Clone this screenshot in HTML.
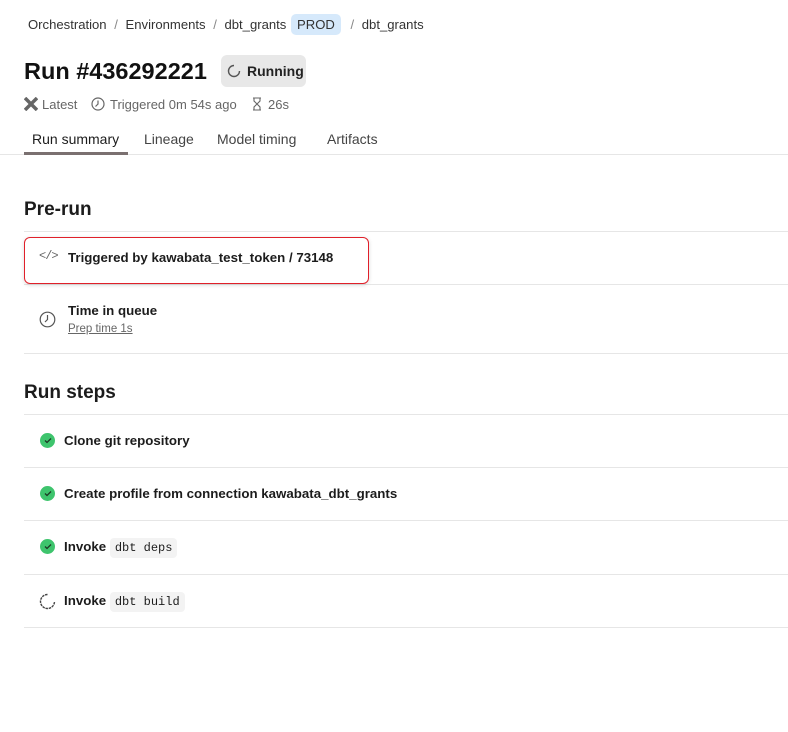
<!DOCTYPE html>
<html><head><style>
body{margin:0;width:788px;height:732px;background:#fff;font-family:"Liberation Sans",sans-serif;color:#1c1c1c;position:relative;overflow:hidden}
.a{position:absolute;white-space:nowrap}
.line{position:absolute;left:24px;right:0;height:1px;background:#e6e6e6}
.code{font-family:"Liberation Mono",monospace;font-size:12px;background:#f3f3f3;border-radius:4px;padding:3px 5px;font-weight:normal}
.chk{position:absolute;left:40px;width:15px;height:15px;border-radius:50%;background:#3ec46d}
b{font-weight:bold}
</style></head><body>
<div class="a" style="left:28px;top:17px;font-size:13.1px;color:#333">Orchestration <span style="color:#888;margin:0 4px">/</span> Environments <span style="color:#888;margin:0 4px">/</span> dbt_grants <span style="background:#d6e9fb;border-radius:5px;padding:3px 6px;margin-left:1px">PROD</span> <span style="color:#888;margin:0 4px 0 6px">/</span> dbt_grants</div>
<div class="a" style="left:24px;top:58px;font-size:23.5px;font-weight:bold;color:#111">Run #436292221</div>
<div class="a" style="left:221px;top:55px;width:85px;height:32px;background:#e8e8e8;border-radius:6px"></div>
<svg class="a" style="left:227px;top:64px" width="14" height="14" viewBox="0 0 14 14"><path d="M7 1.5A5.5 5.5 0 1 0 12.5 7" fill="none" stroke="#555" stroke-width="1.4"/></svg>
<div class="a" style="left:247px;top:63px;font-size:14px;font-weight:bold;color:#222">Running</div>
<svg class="a" style="left:24px;top:97px" width="14" height="14" viewBox="0 0 14 14"><path d="M1 1L13 13M13 1L1 13" stroke="#666" stroke-width="3.5"/></svg>
<div class="a" style="left:42px;top:97px;font-size:13px;color:#666">Latest</div>
<svg class="a" style="left:91px;top:97px" width="14" height="14" viewBox="0 0 14 14"><circle cx="7" cy="7" r="6" fill="none" stroke="#666" stroke-width="1.2"/><path d="M7 3.5V7L4.5 9.5" fill="none" stroke="#666" stroke-width="1.2"/></svg>
<div class="a" style="left:110px;top:97px;font-size:13px;color:#666">Triggered 0m 54s ago</div>
<svg class="a" style="left:251px;top:97px" width="12" height="14" viewBox="0 0 12 14"><path d="M2 1H10M2 13H10M3 1V4L6 7L3 10V13M9 1V4L6 7L9 10V13" fill="none" stroke="#666" stroke-width="1.1"/></svg>
<div class="a" style="left:268px;top:97px;font-size:13px;color:#666">26s</div>
<div class="a" style="left:32px;top:131px;font-size:14px;color:#1c1c1c">Run summary</div>
<div class="a" style="left:144px;top:131px;font-size:14px;color:#444">Lineage</div>
<div class="a" style="left:217px;top:131px;font-size:14px;color:#444">Model timing</div>
<div class="a" style="left:327px;top:131px;font-size:14px;color:#444">Artifacts</div>
<div class="line" style="top:154px;left:0"></div>
<div class="a" style="left:24px;top:152px;width:104px;height:3px;background:#7a7070"></div>
<div class="a" style="left:24px;top:199px;font-size:19px;font-weight:bold">Pre-run</div>
<div class="line" style="top:231px"></div>
<div class="line" style="top:284px"></div>
<div class="a" style="left:24px;top:237px;width:343px;height:45px;border:1.5px solid #e0202a;border-radius:6px;box-shadow:0 1px 4px rgba(0,0,0,.15)"></div>
<div class="a" style="left:39px;top:249px;font-size:12px;color:#666;font-family:'Liberation Mono',monospace;letter-spacing:-1px">&lt;/&gt;</div>
<div class="a" style="left:68px;top:250px;font-size:13.3px;font-weight:bold">Triggered by kawabata_test_token / 73148</div>
<svg class="a" style="left:39px;top:311px" width="17" height="17" viewBox="0 0 17 17"><circle cx="8.5" cy="8.5" r="7.3" fill="none" stroke="#555" stroke-width="1.2"/><path d="M8.5 4V8.5L6 11" fill="none" stroke="#555" stroke-width="1.2"/></svg>
<div class="a" style="left:68px;top:303px;font-size:13.3px;font-weight:bold">Time in queue</div>
<div class="a" style="left:68px;top:323px;font-size:11.5px;color:#666;text-decoration:underline">Prep time 1s</div>
<div class="line" style="top:353px"></div>
<div class="a" style="left:24px;top:382px;font-size:19px;font-weight:bold">Run steps</div>
<div class="line" style="top:414px"></div>
<div class="chk" style="top:433px"></div><svg class="a" style="left:44px;top:437px" width="8" height="7"><path d="M1 3.5L3 5.5L7 1.5" fill="none" stroke="#1c3a25" stroke-width="1.3"/></svg>
<div class="a" style="left:64px;top:433px;font-size:13.3px;font-weight:bold">Clone git repository</div>
<div class="line" style="top:467px"></div>
<div class="chk" style="top:486px"></div><svg class="a" style="left:44px;top:490px" width="8" height="7"><path d="M1 3.5L3 5.5L7 1.5" fill="none" stroke="#1c3a25" stroke-width="1.3"/></svg>
<div class="a" style="left:64px;top:486px;font-size:13.3px;font-weight:bold">Create profile from connection kawabata_dbt_grants</div>
<div class="line" style="top:520px"></div>
<div class="chk" style="top:539px"></div><svg class="a" style="left:44px;top:543px" width="8" height="7"><path d="M1 3.5L3 5.5L7 1.5" fill="none" stroke="#1c3a25" stroke-width="1.3"/></svg>
<div class="a" style="left:64px;top:539px;font-size:13.3px;font-weight:bold">Invoke <span class="code">dbt deps</span></div>
<div class="line" style="top:574px"></div>
<svg class="a" style="left:39px;top:593px" width="17" height="17" viewBox="0 0 17 17"><path d="M8.5 1.5A7 7 0 1 0 15.5 8.5" fill="none" stroke="#444" stroke-width="1.4" stroke-dasharray="2.5 0.8"/></svg>
<div class="a" style="left:64px;top:593px;font-size:13.3px;font-weight:bold">Invoke <span class="code">dbt build</span></div>
<div class="line" style="top:627px"></div>
</body></html>
